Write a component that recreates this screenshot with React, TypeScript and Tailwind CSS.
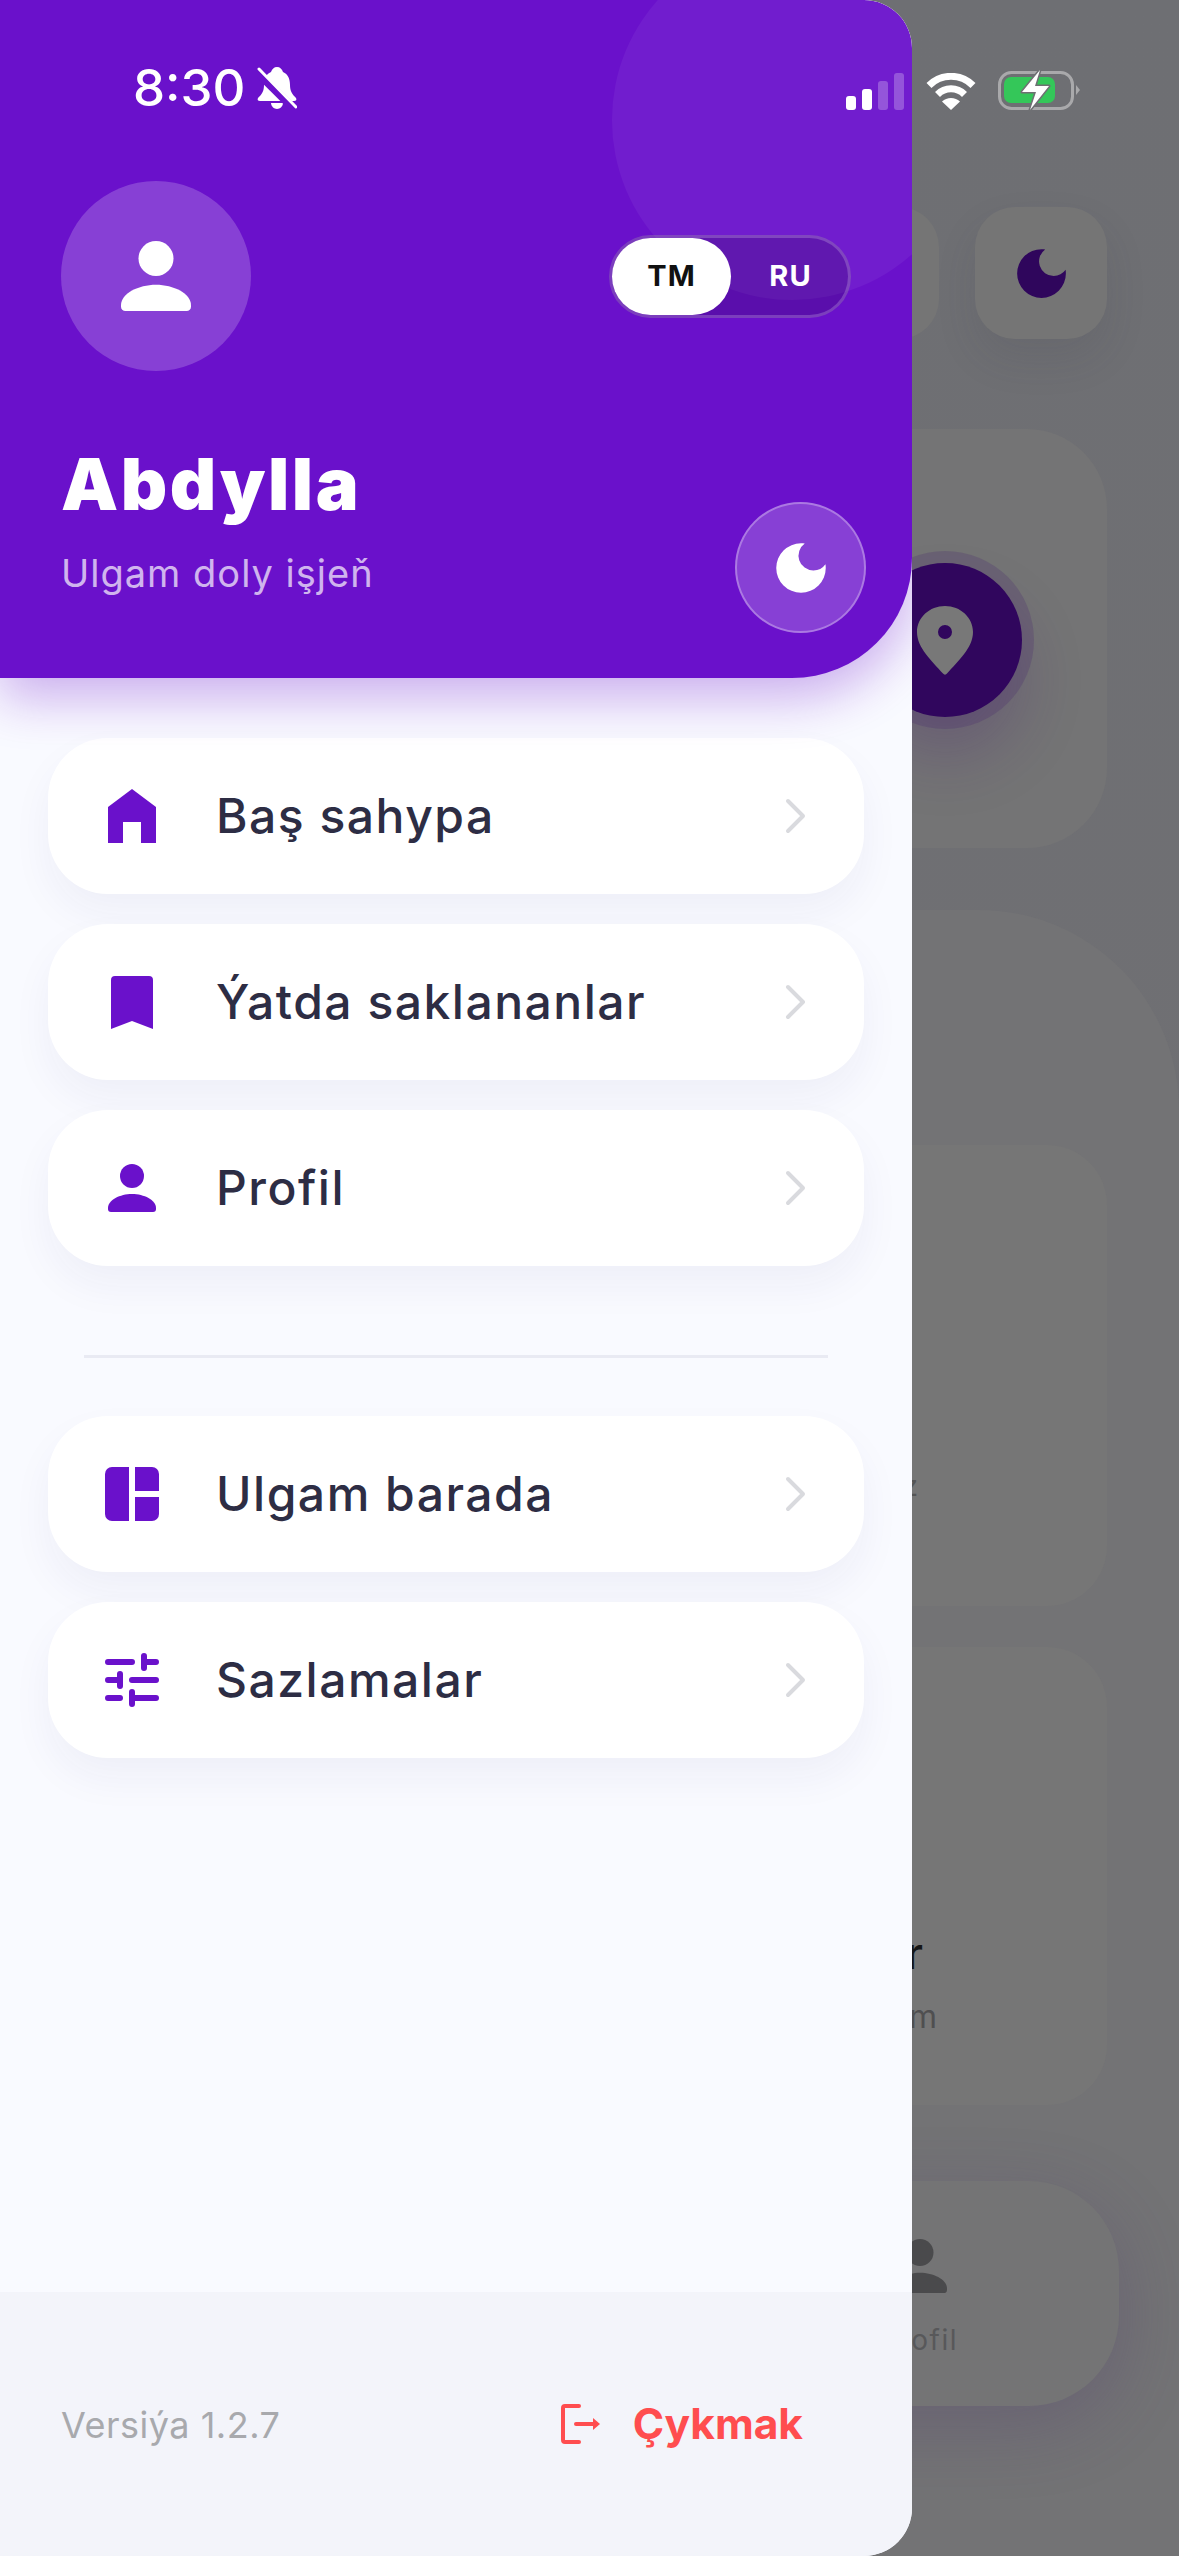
import React from "react";

const PURPLE = "#6a11cb";
const PERSON_BODY = "M0 44C0 36 12 30 24 30C36 30 48 36 48 44V45a3 3 0 0 1-3 3H3a3 3 0 0 1-3-3Z";
const MOON = "M12 3a9 9 0 1 0 9 9c0-.46-.04-.92-.1-1.36a5.389 5.389 0 0 1-4.4 2.26 5.403 5.403 0 0 1-3.14-9.8c-.44-.06-.9-.1-1.36-.1z";

function Person({ size, color }: { size: number; color: string }) {
  return (
    <svg width={size} height={size} viewBox="0 0 48 48" fill={color} className="shrink-0">
      <circle cx="24" cy="12" r="12" />
      <path d={PERSON_BODY} />
    </svg>
  );
}

function Moon({ size, color }: { size: number; color: string }) {
  return (
    <svg width={size} height={size} viewBox="0 0 24 24" fill={color} className="shrink-0">
      <path d={MOON} />
    </svg>
  );
}

const HomeIcon = () => (
  <svg width="48" height="54" viewBox="0 0 48 54" fill={PURPLE}>
    <path d="M24 0L48 18V54H33V33H15V54H0V18Z" />
  </svg>
);
const BookmarkIcon = () => (
  <svg width="42" height="53" viewBox="0 0 42 53" fill={PURPLE}>
    <path d="M4 0H38a4 4 0 0 1 4 4V53L21 45L0 53V4a4 4 0 0 1 4-4Z" />
  </svg>
);
const GridIcon = () => (
  <svg width="54" height="54" viewBox="0 0 54 54" fill={PURPLE}>
    <path d="M7 0H24V54H7a7 7 0 0 1-7-7V7a7 7 0 0 1 7-7Z" />
    <path d="M30 0H47a7 7 0 0 1 7 7V24H30Z" />
    <path d="M30 30H54V47a7 7 0 0 1-7 7H30Z" />
  </svg>
);
const SlidersIcon = () => (
  <svg width="54" height="54" viewBox="0 0 54 54" fill="none" stroke={PURPLE} strokeWidth="6" strokeLinecap="round">
    <path d="M3 9H27M39 3V15M39 9H51M3 27H12M15 21V33M27 27H51M3 45H15M27 39V51M27 45H51" />
  </svg>
);
const Chevron = () => (
  <svg width="22" height="36" viewBox="0 0 22 36" fill="none" stroke="#d9dade" strokeWidth="4" strokeLinecap="round" strokeLinejoin="round">
    <path d="M3 3L18 18L3 33" />
  </svg>
);

function MenuItem({ icon, label }: { icon: React.ReactNode; label: string }) {
  return (
    <div className="flex h-[156px] items-center rounded-[60px] bg-white pr-[57px] shadow-[0_20px_40px_rgba(40,40,110,0.05)]">
      <div className="flex w-[168px] shrink-0 items-center justify-center">{icon}</div>
      <span className="flex-1 text-[48px] font-medium leading-[56px] tracking-[1.5px] text-[#2d2d44]">{label}</span>
      <Chevron />
    </div>
  );
}

function StatusBar() {
  return (
    <div className="absolute left-0 top-0 z-20 flex h-[120px] w-full items-start pl-[133px] pt-[58px]">
      <span className="text-[51px] font-medium leading-[60px] text-white">8:30</span>
      <svg width="40" height="42" viewBox="0 0 40 42" className="ml-[12px] mt-[9px]">
        <path fill="#fff" d="M20 0c3 0 5 2 6 5 5 2 7 7 7 13 0 6 2 9 6 13 1 2 0 3-2 3H3c-2 0-3-1-2-3 4-4 6-7 6-13 0-6 2-11 7-13 1-3 3-5 6-5Z" />
        <path fill="#fff" d="M14 36h12c0 3-3 6-6 6s-6-3-6-6Z" />
        <path stroke={PURPLE} strokeWidth="8" d="M-1 4L37 42" />
        <path stroke="#fff" strokeWidth="3" strokeLinecap="round" d="M2 2L39 40" />
      </svg>
      <div className="ml-auto flex items-end pr-[98px] pt-[11px]">
        <div className="flex items-end gap-[6px]">
          <div className="h-[14px] w-[10px] rounded-[3px] bg-white" />
          <div className="h-[21px] w-[10px] rounded-[3px] bg-white" />
          <div className="h-[29px] w-[10px] rounded-[3px] bg-white/25" />
          <div className="h-[37px] w-[10px] rounded-[3px] bg-white/25" />
        </div>
        <svg width="50" height="37" viewBox="0 0 50 37" fill="none" stroke="#fff" strokeWidth="7" className="ml-[22px]">
          <path d="M3 12.5A31 31 0 0 1 47 12.5" />
          <path d="M11.5 21.5A19 19 0 0 1 38.5 21.5" />
          <path fill="#fff" stroke="none" d="M16 28.5A13 13 0 0 1 34 28.5L25 37Z" />
        </svg>
        <svg width="84" height="42" viewBox="0 0 84 42" className="ml-[21px] mb-[-1px]">
          <rect x="2.5" y="3.5" width="73" height="36" rx="12" fill="none" stroke="#a9a9ab" strokeWidth="3" />
          <rect x="7" y="8" width="51" height="26" rx="7" fill="#34c759" />
          <path d="M79 16L83 21L79 26Z" fill="#a9a9ab" />
          <path d="M43 1L25 23H39L33 41L52 17H38Z" fill="#fff" stroke="#6f7073" strokeWidth="3" paintOrder="stroke" strokeLinejoin="round" />
        </svg>
      </div>
    </div>
  );
}

function Backdrop() {
  return (
    <div className="flex h-full w-full flex-col bg-gradient-to-b from-[#6e6f73] to-[#717073]">
      <div className="flex justify-end gap-[36px] pr-[72px] pt-[207px]">
        <div className="h-[132px] w-[132px] rounded-[40px] bg-[#757575]" />
        <div className="flex h-[132px] w-[132px] items-center justify-center rounded-[40px] bg-[#757575] shadow-[0_20px_40px_rgba(60,60,70,0.12)]">
          <Moon size={65} color="#2f065c" />
        </div>
      </div>
      <div className="mr-[72px] mt-[90px] flex h-[419px] justify-end rounded-[80px] bg-[#747475] pr-[85px] pt-[134px]">
        <div className="flex h-[154px] w-[154px] items-center justify-center rounded-full bg-[#30065d] shadow-[0_0_0_12px_rgba(70,30,110,0.22),0_40px_60px_rgba(70,30,110,0.25)]">
          <svg width="56" height="69" viewBox="0 0 56 69">
            <path fill="#787878" fillRule="evenodd" d="M28 0c15.5 0 28 11.500 28 26 0 16-15 29-26 41.500-1 1.500-3 1.500-4 0C15 55 0 42 0 26 0 11.500 12.500 0 28 0ZM28 19a7 7 0 1 0 0 14 7 7 0 0 0 0-14Z" />
          </svg>
        </div>
      </div>
      <div className="mt-[62px] flex flex-1 flex-col rounded-tr-[200px] bg-[#737375] pr-[72px] pt-[235px]">
        <div className="flex h-[461px] flex-col items-end rounded-[60px] bg-[#767676] pr-[189px] pt-[323px]">
          <span className="text-[28px] leading-[36px] text-[#555]">z</span>
        </div>
        <div className="mt-[41px] flex h-[458px] flex-col items-end rounded-[60px] bg-[#767676] pt-[281px]">
          <span className="pr-[184px] text-[44px] font-medium leading-[50px] text-[#151515]">r</span>
          <span className="mt-[19px] pr-[170px] text-[32px] leading-[40px] text-[#4f4f50]">m</span>
        </div>
        <div className="mr-[-12px] mt-[76px] flex h-[225px] flex-col items-end rounded-[90px] bg-[#747475] pt-[58px] shadow-[0_20px_70px_rgba(80,60,110,0.3)]">
          <div className="pr-[172px]">
            <Person size={54} color="#4a4a4c" />
          </div>
          <span className="mt-[29px] pr-[161px] text-[28px] leading-[36px] tracking-[1.5px] text-[#58585a]">Profil</span>
        </div>
      </div>
    </div>
  );
}

function Drawer() {
  return (
    <div className="absolute left-0 top-0 z-10 flex h-full w-[912px] flex-col overflow-hidden rounded-r-[48px] bg-[#f9faff]">
      <div className="relative z-10 h-[678px] shrink-0 rounded-br-[120px] rounded-tr-[48px] bg-[#6a11cb] px-[61px] pt-[181px] shadow-[0_20px_50px_rgba(106,17,203,0.32)]">
        <div className="absolute inset-0 overflow-hidden rounded-br-[120px] rounded-tr-[48px]">
          <div className="absolute left-[612px] top-[-60px] h-[360px] w-[360px] rounded-full bg-white/5" />
        </div>
        <div className="relative flex items-center justify-between">
          <div className="flex h-[190px] w-[190px] items-center justify-center rounded-full bg-white/20">
            <Person size={70} color="#fff" />
          </div>
          <div className="flex h-[83px] w-[242px] items-center rounded-full border-[3px] border-white/20 bg-black/15">
            <div className="flex h-[77px] w-[119px] items-center justify-center rounded-full bg-white text-[29px] font-bold tracking-[1px] text-[#111]">TM</div>
            <div className="flex h-[77px] flex-1 items-center justify-center pl-[2px] text-[29px] font-bold tracking-[1px] text-white">RU</div>
          </div>
        </div>
        <div className="relative mt-[73px] flex items-end justify-between">
          <div className="pb-[38px]">
            <div className="text-[72px] font-black leading-[80px] tracking-[2.5px] text-white">Abdylla</div>
            <div className="mt-[27px] text-[38px] leading-[44px] tracking-[1px] text-white/70">Ulgam doly işjeň</div>
          </div>
          <div className="mr-[-15px] flex h-[131px] w-[131px] items-center justify-center rounded-full border-2 border-white/30 bg-white/20">
            <Moon size={66} color="#fff" />
          </div>
        </div>
      </div>

      <div className="flex flex-1 flex-col px-[48px] pt-[60px]">
        <div className="flex flex-col gap-[30px]">
          <MenuItem icon={<HomeIcon />} label="Baş sahypa" />
          <MenuItem icon={<BookmarkIcon />} label="Ýatda saklananlar" />
          <MenuItem icon={<Person size={48} color={PURPLE} />} label="Profil" />
        </div>
        <div className="mx-[36px] mb-[58px] mt-[89px] h-[3px] bg-[#e9eaf3]" />
        <div className="flex flex-col gap-[30px]">
          <MenuItem icon={<GridIcon />} label="Ulgam barada" />
          <MenuItem icon={<SlidersIcon />} label="Sazlamalar" />
        </div>
      </div>

      <div className="flex h-[264px] shrink-0 items-center justify-between bg-[#f3f4fa] pl-[61px] pr-[109px]">
        <span className="mt-[2px] text-[36px] leading-[44px] tracking-[0.5px] text-[#a8a9ad]">Versiýa 1.2.7</span>
        <div className="flex items-center gap-[32px]">
          <svg width="40" height="40" viewBox="0 0 40 40" fill="none" stroke="#ff4d4f" strokeWidth="4" strokeLinecap="round" strokeLinejoin="round">
            <path d="M18 2H4a2 2 0 0 0-2 2V36a2 2 0 0 0 2 2H18" />
            <path d="M15 20H32" />
            <path d="M32 14L39 20L32 26Z" fill="#ff4d4f" stroke="none" />
          </svg>
          <span className="text-[42.5px] font-bold leading-[50px] text-[#ff4d4f]">Çykmak</span>
        </div>
      </div>
    </div>
  );
}

export default function App() {
  return (
    <div className="relative h-[2556px] w-[1179px] overflow-hidden font-['Inter','Noto_Sans',sans-serif]">
      <Backdrop />
      <Drawer />
      <StatusBar />
    </div>
  );
}
